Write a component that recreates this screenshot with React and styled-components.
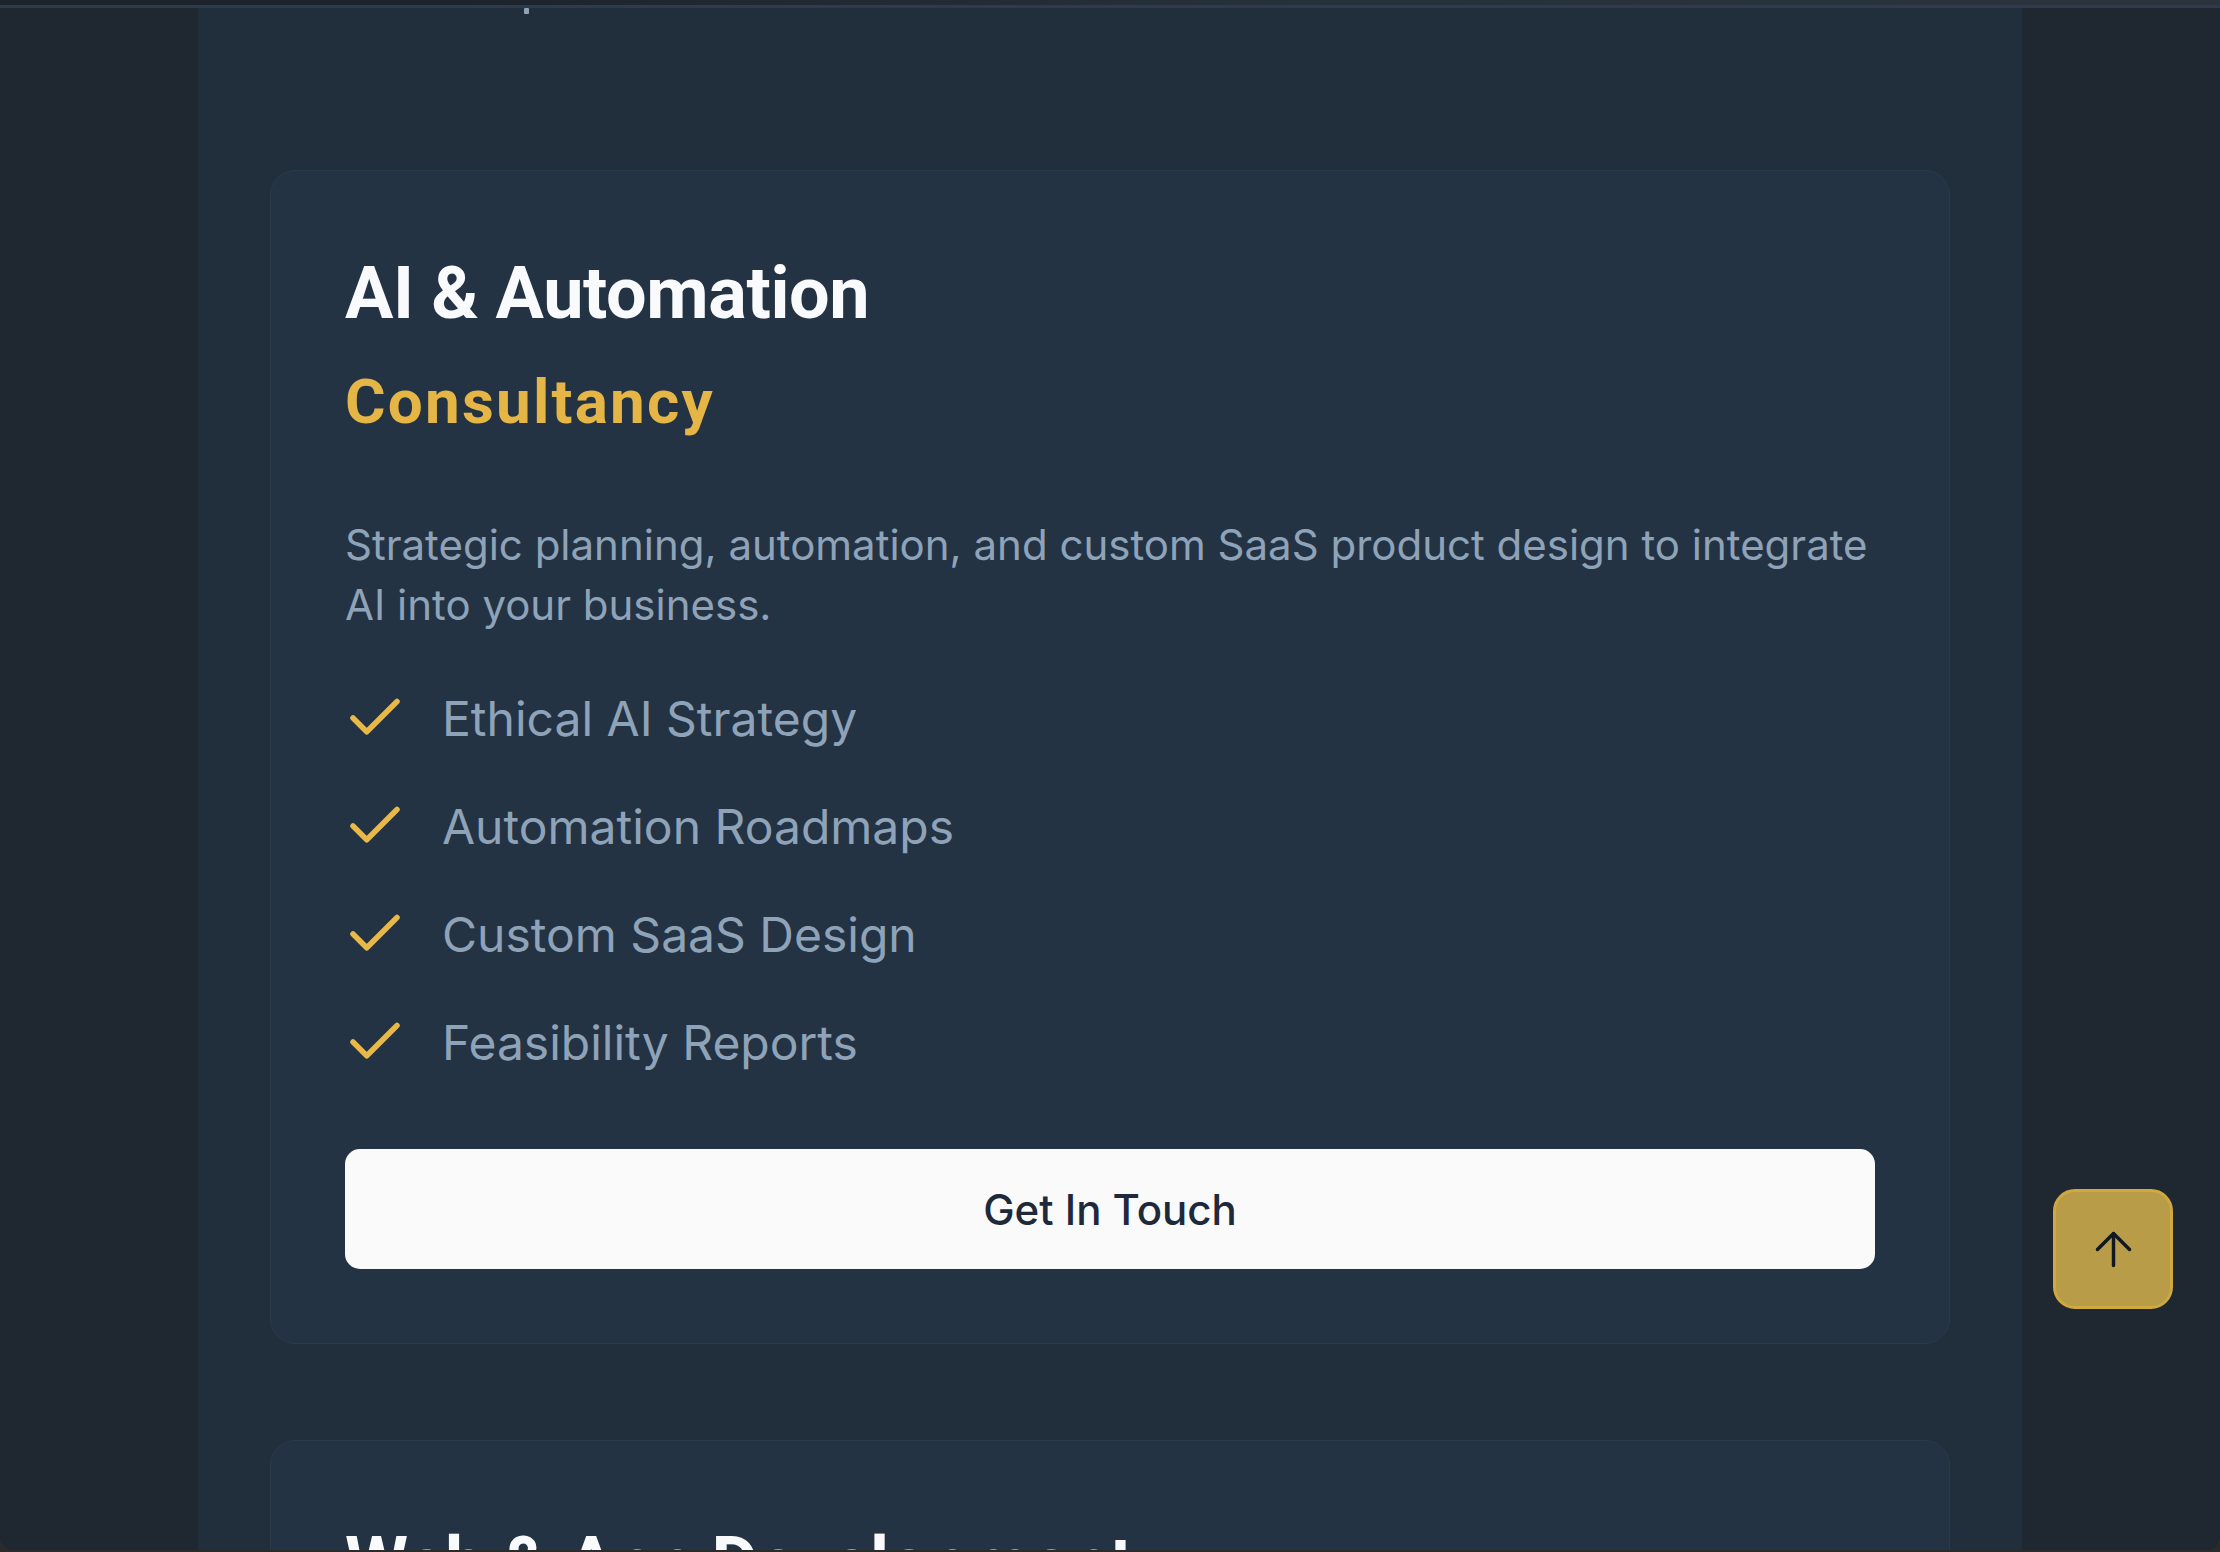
import React from 'react'
import styled, { createGlobalStyle } from 'styled-components'
import { Check, ArrowUp } from 'lucide-react'

const GlobalStyle = createGlobalStyle`
    html, body {
        margin: 0;
        padding: 0;
        background-color: #2b2b2c;
    }
    body {
        font-family: Inter, "Noto Sans", sans-serif;
        -webkit-font-smoothing: antialiased;
    }
    * {
        box-sizing: border-box;
    }
`

const Frame = styled.div`
    height: 1550px;
    overflow: hidden;
    display: flex;
    flex-direction: column;
    background-color: #1f2731;
    border-radius: 0 0 14px 14px;
`

const TopStrip = styled.div`
    height: 8px;
    flex-shrink: 0;
    background: linear-gradient(90deg, #1c232c 0%, #1c232c 20%, #27313c 60%, #2a333e 100%);
    border-bottom: 3px solid #2d3b4c;
`

const Columns = styled.div`
    flex: 1;
    display: grid;
    grid-template-columns: 198px 1fr 198px;
    min-height: 0;
`

const SideRail = styled.div`
    background-color: #1f2731;
`

const Main = styled.main`
    background-color: #212e3c;
    padding: 0 72px;
    display: flex;
    flex-direction: column;
    gap: 96px;
`

/* tail end of the section above, only its last descender is on screen */
const SectionTail = styled.div`
    height: 162px;
    margin-bottom: -96px;
    padding-left: 254px;
`

const Descender = styled.span`
    display: block;
    width: 5px;
    height: 6px;
    background-color: #8fa3b8;
    border-radius: 1px;
`

const Card = styled.section`
    flex-shrink: 0;
    background-color: #243344;
    border: 1px solid #2b3a4a;
    border-radius: 25px;
    padding: 74px;
    display: flex;
    flex-direction: column;
`

const Title = styled.h2`
    margin: 0;
    font-family: Roboto, "Liberation Sans", sans-serif;
    font-weight: 700;
    font-size: 72px;
    line-height: 97px;
    letter-spacing: -0.4px;
    color: #f8fafc;
`

const Subtitle = styled.h3`
    margin: 24px 0 0;
    font-family: Roboto, "Liberation Sans", sans-serif;
    font-weight: 700;
    font-size: 62px;
    line-height: 72px;
    letter-spacing: 2.2px;
    color: #e5b646;
`

const Description = styled.p`
    margin: 77px 0 0;
    font-size: 42px;
    line-height: 60px;
    font-weight: 400;
    color: #8fa3b8;
`

const FeatureList = styled.ul`
    list-style: none;
    margin: 50px 0 0;
    padding: 0;
    display: flex;
    flex-direction: column;
    gap: 42px;
`

const Feature = styled.li`
    display: flex;
    align-items: center;
    gap: 34px;
    height: 66px;
    font-size: 48px;
    font-weight: 400;
    color: #8fa3b8;
`

const CheckIcon = styled(Check)`
    flex-shrink: 0;
    color: #e8b949;
    margin-left: -3px;
`

const ContactButton = styled.button`
    margin-top: 74px;
    height: 120px;
    width: 100%;
    border: none;
    border-radius: 15px;
    background-color: #fafafa;
    color: #1e293b;
    font-family: Inter, sans-serif;
    font-size: 42px;
    font-weight: 500;
    cursor: pointer;
`

const ScrollTop = styled.button`
    position: fixed;
    right: 47px;
    bottom: 243px;
    width: 120px;
    height: 120px;
    display: flex;
    align-items: center;
    justify-content: center;
    background-color: #b99c47;
    border: 3px solid #cfa83f;
    border-radius: 22px;
    color: #111820;
    cursor: pointer;
    padding: 0;
`

const services = [
    {
        title: 'AI & Automation',
        subtitle: 'Consultancy',
        text: 'Strategic planning, automation, and custom SaaS product design to integrate AI into your business.',
        features: ['Ethical AI Strategy', 'Automation Roadmaps', 'Custom SaaS Design', 'Feasibility Reports'],
    },
    {
        title: 'Web & App Development',
        subtitle: 'Engineering',
        text: 'Modern, fast and accessible websites and apps built for growth.',
        features: ['Responsive Websites', 'Web Applications', 'Mobile Apps', 'Maintenance'],
    },
]

export default function App() {
    return (
        <>
            <GlobalStyle />
            <Frame>
                <TopStrip />
                <Columns>
                    <SideRail />
                    <Main>
                        <SectionTail>
                            <Descender />
                        </SectionTail>
                        {services.map((s) => (
                            <Card key={s.title}>
                                <Title>{s.title}</Title>
                                <Subtitle>{s.subtitle}</Subtitle>
                                <Description>{s.text}</Description>
                                <FeatureList>
                                    {s.features.map((f) => (
                                        <Feature key={f}>
                                            <CheckIcon size={66} strokeWidth={2} />
                                            {f}
                                        </Feature>
                                    ))}
                                </FeatureList>
                                <ContactButton>Get In Touch</ContactButton>
                            </Card>
                        ))}
                    </Main>
                    <SideRail />
                </Columns>
            </Frame>
            <ScrollTop aria-label="Back to top">
                <ArrowUp size={55} strokeWidth={1.5} />
            </ScrollTop>
        </>
    )
}
